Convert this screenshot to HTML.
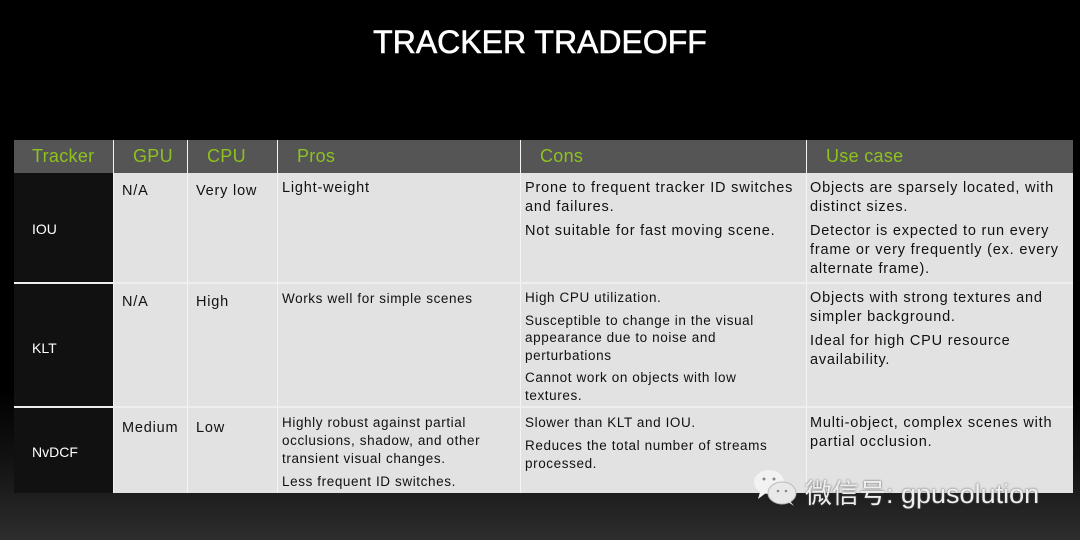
<!DOCTYPE html>
<html><head><meta charset="utf-8"><style>
*{margin:0;padding:0;box-sizing:border-box}
body{width:1080px;height:540px;overflow:hidden;background:linear-gradient(#000 0,#000 390px,#151515 470px,#2e2e2e 540px);font-family:"Liberation Sans","Noto Sans CJK SC",sans-serif;position:relative}
h1{position:absolute;top:24px;left:0;width:1080px;text-align:center;color:#fff;font-size:32px;font-weight:normal;-webkit-text-stroke:0.6px #fff}
.c{position:absolute;font-size:14.5px;letter-spacing:0.8px;color:#111;line-height:19px;padding:4px 4px}
.c p{margin-bottom:5px}
.s{font-size:13.5px;letter-spacing:0.6px}
.h{position:absolute;top:140px;height:33px;background:#555;color:#8dc21f;font-size:18px;line-height:33px;letter-spacing:0.3px}
.bg{position:absolute;background:#e2e2e2}
.blk{position:absolute;background:#111;color:#fff;font-size:14px}
.vl{position:absolute;top:140px;height:353px;width:1px;background:#f4f4f4}
.hl{position:absolute;left:14px;width:1059px;height:2px;background:#eee}
</style></head><body>
<h1>TRACKER TRADEOFF</h1>
<div class="h" style="left:14px;width:1059px"></div>
<div class="h" style="left:32px">Tracker</div>
<div class="h" style="left:133px">GPU</div>
<div class="h" style="left:207px">CPU</div>
<div class="h" style="left:297px">Pros</div>
<div class="h" style="left:540px">Cons</div>
<div class="h" style="left:826px">Use case</div>
<div class="bg" style="left:113px;top:173px;width:960px;height:320px"></div>
<div class="blk" style="left:14px;top:173px;width:99px;height:320px"></div>
<div class="blk" style="left:32px;top:221px;background:none">IOU</div>
<div class="blk" style="left:32px;top:340px;background:none">KLT</div>
<div class="blk" style="left:32px;top:444px;background:none">NvDCF</div>
<div class="vl" style="left:113px"></div><div class="vl" style="left:187px"></div><div class="vl" style="left:277px"></div><div class="vl" style="left:520px"></div><div class="vl" style="left:806px"></div>
<div class="hl" style="top:282px"></div><div class="hl" style="top:406px"></div>
<div class="c" style="left:118px;top:178px">N/A</div>
<div class="c" style="left:192px;top:178px">Very low</div>
<div class="c" style="left:278px;top:175px">Light-weight</div>
<div class="c" style="left:521px;top:175px;width:285px"><p>Prone to frequent tracker ID switches and failures.</p><p>Not suitable for fast moving scene.</p></div>
<div class="c" style="left:806px;top:175px;width:267px"><p>Objects are sparsely located, with distinct sizes.</p><p>Detector is expected to run every frame or very frequently (ex. every alternate frame).</p></div>
<div class="c" style="left:118px;top:289px">N/A</div>
<div class="c" style="left:192px;top:289px">High</div>
<div class="c s" style="left:278px;top:285px">Works well for simple scenes</div>
<div class="c s" style="left:521px;top:285px;width:255px;line-height:17.5px"><p>High CPU utilization.</p><p>Susceptible to change in the visual appearance due to noise and perturbations</p><p>Cannot work on objects with low textures.</p></div>
<div class="c" style="left:806px;top:285px;width:267px"><p>Objects with strong textures and simpler background.</p><p>Ideal for high CPU resource availability.</p></div>
<div class="c" style="left:118px;top:415px">Medium</div>
<div class="c" style="left:192px;top:415px">Low</div>
<div class="c s" style="left:278px;top:410px;width:242px;line-height:18px"><p>Highly robust against partial occlusions, shadow, and other transient visual changes.</p><p>Less frequent ID switches.</p></div>
<div class="c s" style="left:521px;top:410px;width:285px;line-height:18px"><p>Slower than KLT and IOU.</p><p>Reduces the total number of streams processed.</p></div>
<div class="c" style="left:806px;top:410px;width:267px"><p>Multi-object, complex scenes with partial occlusion.</p></div>
<svg style="position:absolute;left:752px;top:468px" width="48" height="40" viewBox="0 0 48 40"><ellipse cx="17" cy="14" rx="15" ry="12" fill="#f2f2f2"/><path d="M8 24 L6 31 L14 25Z" fill="#f2f2f2"/><ellipse cx="30" cy="25" rx="14" ry="11" fill="#e8e8e8" stroke="#bbb"/><path d="M38 33 L42 38 L36 34Z" fill="#e8e8e8"/><circle cx="12" cy="11" r="1.5" fill="#888"/><circle cx="22" cy="11" r="1.5" fill="#888"/><circle cx="26" cy="23" r="1.3" fill="#888"/><circle cx="34" cy="23" r="1.3" fill="#888"/></svg>
<div style="position:absolute;left:805px;top:472px;font-size:27px;color:#eee;text-shadow:0 0 2px #555">微信号: gpusolution</div>
</body></html>
